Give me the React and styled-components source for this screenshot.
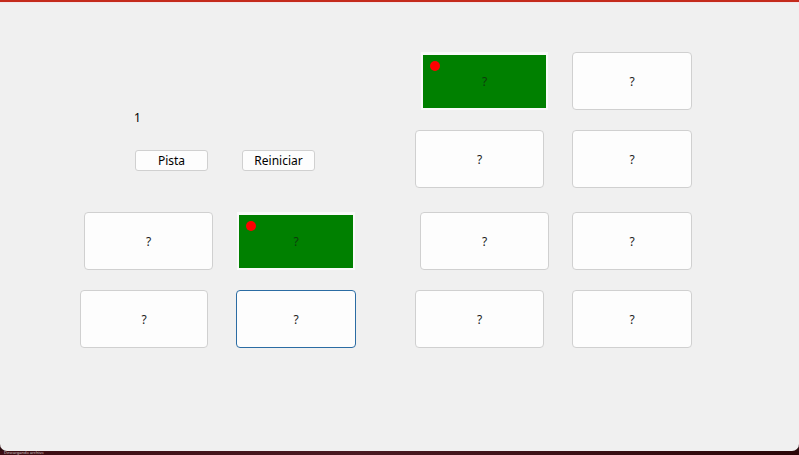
import React from "react";
import styled, { createGlobalStyle } from "styled-components";

const GlobalStyle = createGlobalStyle`
  html, body {
    margin: 0;
    padding: 0;
    background: #2a0b0e;
  }
  body {
    font-family: "Noto Sans", "Open Sans", sans-serif;
    font-size: 12px;
    color: #000;
  }
`;

const rows = {
  first: [{ ml: 6, w: 127, hit: true }, { ml: 24, w: 120 }],
  second: [{ ml: 0, w: 129 }, { ml: 28, w: 120 }],
  third: [
    { ml: 84, w: 129 },
    { ml: 24, w: 118, hit: true },
    { ml: 65, w: 129 },
    { ml: 23, w: 120 },
  ],
  fourth: [
    { ml: 80, w: 128 },
    { ml: 28, w: 120, focused: true },
    { ml: 59, w: 129 },
    { ml: 28, w: 120 },
  ],
};

const CardRow = ({ cards }) => (
  <Row>
    {cards.map((card, i) =>
      card.hit ? (
        <HitCard key={i} $ml={card.ml} $w={card.w}>
          <Dot />?
        </HitCard>
      ) : (
        <Card key={i} $ml={card.ml} $w={card.w} $focused={card.focused}>
          ?
        </Card>
      )
    )}
  </Row>
);

const App = () => {
  return (
    <>
      <GlobalStyle />
      <Window>
        <Board>
          <TopSection>
            <Controls>
              <Counter>1</Counter>
              <ButtonRow>
                <FormButton>Pista</FormButton>
                <FormButton $ml={34}>Reiniciar</FormButton>
              </ButtonRow>
            </Controls>
            <RightStack>
              <CardRow cards={rows.first} />
              <CardRow cards={rows.second} />
            </RightStack>
          </TopSection>
          <LowerRows>
            <CardRow cards={rows.third} />
            <CardRow cards={rows.fourth} />
          </LowerRows>
        </Board>
      </Window>
      <Taskbar>
        <span>Descargando archivo</span>
      </Taskbar>
    </>
  );
};

const Window = styled.div`
  width: 799px;
  height: 451px;
  box-sizing: border-box;
  background: #f0f0f0;
  border-top: 2px solid #c42b1c;
  box-shadow: inset 0 1px 0 #f3e4ea;
  border-radius: 0 0 7px 7px;
  overflow: hidden;
`;

const Board = styled.div`
  display: flex;
  flex-direction: column;
  padding-top: 50px;
`;

const TopSection = styled.div`
  display: flex;
`;

const Controls = styled.div`
  width: 415px;
  display: flex;
  flex-direction: column;
`;

const Counter = styled.div`
  margin: 58px 0 0 134px;
  line-height: 16px;
  height: 16px;
`;

const ButtonRow = styled.div`
  display: flex;
  margin: 24px 0 0 135px;
`;

const FormButton = styled.button`
  margin-left: ${(p) => p.$ml || 0}px;
  width: 73px;
  height: 21px;
  padding: 0;
  box-sizing: border-box;
  background: #fdfdfd;
  border: 1px solid #d0d0d0;
  border-radius: 3px;
  font-family: "Noto Sans", "Open Sans", sans-serif;
  font-size: 12px;
  line-height: 18px;
  color: #000;
`;

const RightStack = styled.div`
  display: flex;
  flex-direction: column;
  gap: 20px;
`;

const LowerRows = styled.div`
  display: flex;
  flex-direction: column;
  gap: 20px;
  margin-top: 24px;
`;

const Row = styled.div`
  display: flex;
  align-items: flex-start;
`;

const Card = styled.div`
  margin-left: ${(p) => p.$ml}px;
  width: ${(p) => p.$w}px;
  height: 58px;
  box-sizing: border-box;
  display: flex;
  align-items: center;
  justify-content: center;
  background: #fdfdfd;
  border: 1px solid ${(p) => (p.$focused ? "#2b6ca3" : "#d0d0d0")};
  border-radius: 4px;
  color: #1a1a1a;
`;

const HitCard = styled(Card)`
  position: relative;
  background: #008000;
  border: 2px solid #fafafa;
  border-top-width: 3px;
  border-radius: 0;
  color: #0d3b0d;
`;

const Dot = styled.span`
  position: absolute;
  left: 7px;
  top: 6px;
  width: 10px;
  height: 10px;
  border-radius: 50%;
  background: #ff0000;
`;

const Taskbar = styled.div`
  height: 4px;
  overflow: hidden;
  background: linear-gradient(90deg, #3b0d12 0%, #4a1a22 45%, #2a0608 100%);
  span {
    display: block;
    margin: 0 0 0 4px;
    font-size: 4px;
    line-height: 4px;
    color: #d9c7c9;
  }
`;

export default App;
